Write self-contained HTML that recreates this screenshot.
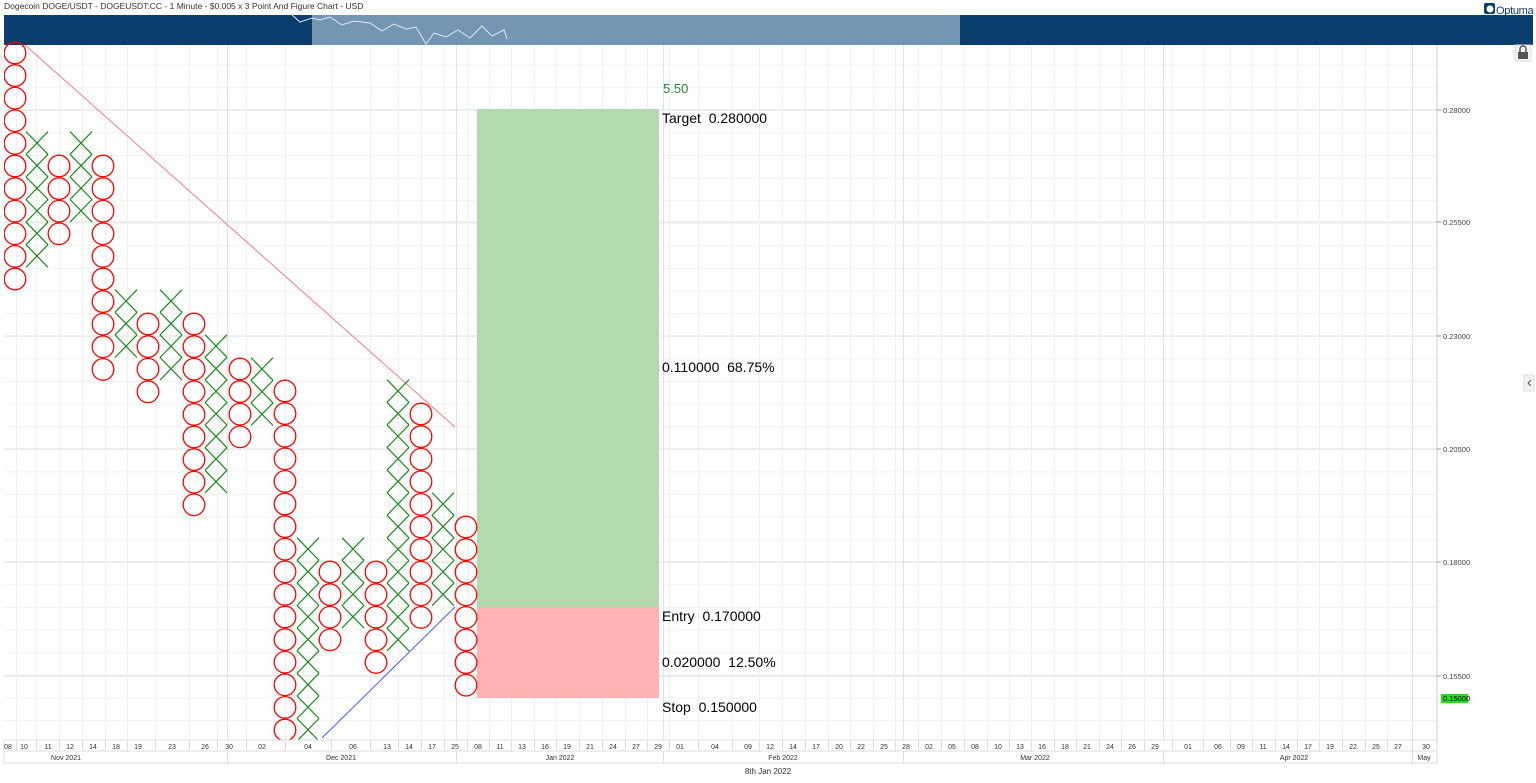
<!DOCTYPE html>
<html><head><meta charset="utf-8"><style>
body{margin:0;width:1536px;height:783px;background:#fff;overflow:hidden;font-family:"Liberation Sans",sans-serif}
svg{position:absolute;left:0;top:0}
</style></head><body>
<svg id="s" width="1536" height="783" xmlns="http://www.w3.org/2000/svg" font-family="Liberation Sans, sans-serif">
<text x="4" y="9" font-size="8.5" fill="#333">Dogecoin DOGE/USDT - DOGEUSDT:CC - 1 Minute - $0.005 x 3 Point And Figure Chart - USD</text>
<g id="grid"></g>
<rect x="4" y="15" width="1529" height="30" fill="#0b3d6e"/>
<rect x="312" y="15" width="648" height="30" fill="#7596b3"/>
<polyline points="292,15 300,22 312,18 320,20 330,17 342,25 354,21 370,23 382,31 394,24 406,29 416,27 426,44 434,33 446,37 458,30 470,38 482,26 492,36 504,30 507,39" fill="none" stroke="#dfe7ef" stroke-width="1"/>
<rect x="1484" y="3" width="11" height="11" rx="2" fill="#0b3d6e"/>
<circle cx="1490" cy="9" r="3.5" fill="#fff"/>
<text x="1496" y="14" font-size="11" fill="#0b3d6e" letter-spacing="-0.3">Optuma</text>
<rect x="477" y="109" width="182" height="498" fill="#b3d9b0"/>
<rect x="477" y="607" width="182" height="91" fill="#ffb3b3"/>
<line x1="25" y1="45" x2="455" y2="427" stroke="#f08080" stroke-width="1"/>
<line x1="322" y1="738" x2="455" y2="607" stroke="#4a5cff" stroke-width="1"/>
<g id="pf"></g>
<g font-size="14" fill="#000">
<text x="663" y="93" fill="#2a8a2a" font-size="13">5.50</text>
<text x="662" y="123">Target&#160;&#160;0.280000</text>
<text x="662" y="372">0.110000&#160;&#160;68.75%</text>
<text x="662" y="621">Entry&#160;&#160;0.170000</text>
<text x="662" y="667">0.020000&#160;&#160;12.50%</text>
<text x="662" y="712">Stop&#160;&#160;0.150000</text>
</g>
<line x1="1437" y1="45" x2="1437" y2="740" stroke="#ccc"/>
<g font-size="7.5" fill="#444" id="yax"></g>
<rect x="1441" y="694" width="27" height="9" fill="#22dd22"/>
<text x="1443" y="701" font-size="7.5" fill="#000">0.15000</text>
<rect x="1515" y="45" width="16" height="16" fill="#f3f3f3" stroke="#ddd"/>
<rect x="1518" y="52" width="10" height="7" fill="#555"/>
<path d="M1520 52v-3a3 3 0 0 1 6 0v3" fill="none" stroke="#555" stroke-width="1.5"/>
<rect x="1524" y="375" width="10" height="16" fill="#f3f3f3" stroke="#ddd"/>
<path d="M1531 380l-3 3 3 3" fill="none" stroke="#555"/>
<rect x="4" y="740" width="1433" height="23" fill="#fff" stroke="#ddd"/>
<line x1="4" y1="751" x2="1437" y2="751" stroke="#ddd"/>
<g id="xax" font-size="7" fill="#333" text-anchor="middle"></g>
<text x="768" y="774" font-size="8" fill="#333" text-anchor="middle">8th Jan 2022</text>
</svg>
<script>
var NS="http://www.w3.org/2000/svg";
function el(p,t,a,txt){var e=document.createElementNS(NS,t);for(var k in a)e.setAttribute(k,a[k]);if(txt)e.textContent=txt;document.getElementById(p).appendChild(e);return e;}
for(var y=42.5;y<740;y+=22.6){el("grid","line",{x1:4,x2:1437,y1:y,y2:y,stroke:"#f2f2f2"});}
[110,222,336,449,562,676].forEach(function(y){el("grid","line",{x1:4,x2:1437,y1:y,y2:y,stroke:"#e0e0e0"});});
var L=[[8,"08"],[24,"10"],[48,"11"],[70,"12"],[93,"14"],[116,"18"],[138,"19"],[172,"23"],[205,"26"],[229,"30"],[262,"02"],[308,"04"],[353,"06"],[387,"13"],[409,"14"],[432,"17"],[455,"25"],[478,"08"],[500,"11"],[522,"13"],[545,"16"],[567,"19"],[590,"21"],[613,"24"],[636,"27"],[658,"29"],[680,"01"],[715,"04"],[748,"09"],[770,"12"],[793,"14"],[816,"17"],[839,"20"],[861,"22"],[884,"25"],[906,"28"],[929,"02"],[952,"05"],[975,"08"],[998,"10"],[1020,"13"],[1042,"16"],[1065,"18"],[1087,"21"],[1110,"24"],[1132,"26"],[1155,"29"],[1188,"01"],[1218,"06"],[1241,"09"],[1263,"11"],[1286,"14"],[1308,"17"],[1330,"19"],[1353,"22"],[1376,"25"],[1398,"27"],[1426,"30"]];
for(var i=0;i<L.length;i++){
 el("xax","text",{x:L[i][0],y:749},L[i][1]);
 if(i<L.length-1){var m=Math.round((L[i][0]+L[i+1][0])/2)+0.5;
  el("grid","line",{x1:m,x2:m,y1:45,y2:740,stroke:"#f0f0f0"});
  el("xax","line",{x1:m,x2:m,y1:740,y2:751,stroke:"#ddd"});}
}
[227,456,663,903,1163,1412].forEach(function(x){el("grid","line",{x1:x+.5,x2:x+.5,y1:45,y2:740,stroke:"#e2e2e2"});el("xax","line",{x1:x+.5,x2:x+.5,y1:751,y2:763,stroke:"#ddd"});});
[[66,"Nov 2021"],[341,"Dec 2021"],[560,"Jan 2022"],[783,"Feb 2022"],[1035,"Mar 2022"],[1294,"Apr 2022"],[1424,"May"]].forEach(function(a){el("xax","text",{x:a[0],y:760},a[1]);});
[[110,"0.28000"],[222,"0.25500"],[336,"0.23000"],[449,"0.20500"],[562,"0.18000"],[676,"0.15500"]].forEach(function(a){el("yax","line",{x1:1437,x2:1441,y1:a[0],y2:a[0],stroke:"#999"});el("yax","text",{x:1443,y:a[0]+3},a[1]);});
var C=[[15,"O",53,279],[37,"X",143,256],[59,"O",166,233],[81,"X",143,211],[103,"O",166,369],[126,"X",301,346],[148,"O",324,391],[171,"X",301,369],[194,"O",324,504],[216,"X",346,481],[240,"O",369,436],[262,"X",369,414],[285,"O",391,730],[308,"X",549,730],[330,"O",572,639],[353,"X",549,617],[376,"O",572,662],[398,"X",391,639],[421,"O",414,617],[443,"X",504,594],[466,"O",527,685]];
var step=22.6;
C.forEach(function(c){
 for(var y=c[2];y<=c[3]+2;y+=step){
  if(c[1]=="O")el("pf","circle",{cx:c[0],cy:y,r:10.8,fill:"none",stroke:"#ff0000","stroke-width":1.3});
  else el("pf","path",{d:"M"+(c[0]-11)+" "+(y-11.3)+"L"+(c[0]+11)+" "+(y+11.3)+"M"+(c[0]+11)+" "+(y-11.3)+"L"+(c[0]-11)+" "+(y+11.3),stroke:"#1a8a1a","stroke-width":1.2,fill:"none"});
 }
});
</script>
<div style="position:absolute;left:0;top:45px;width:4px;height:695px;background:#fff"></div>
</body></html>
